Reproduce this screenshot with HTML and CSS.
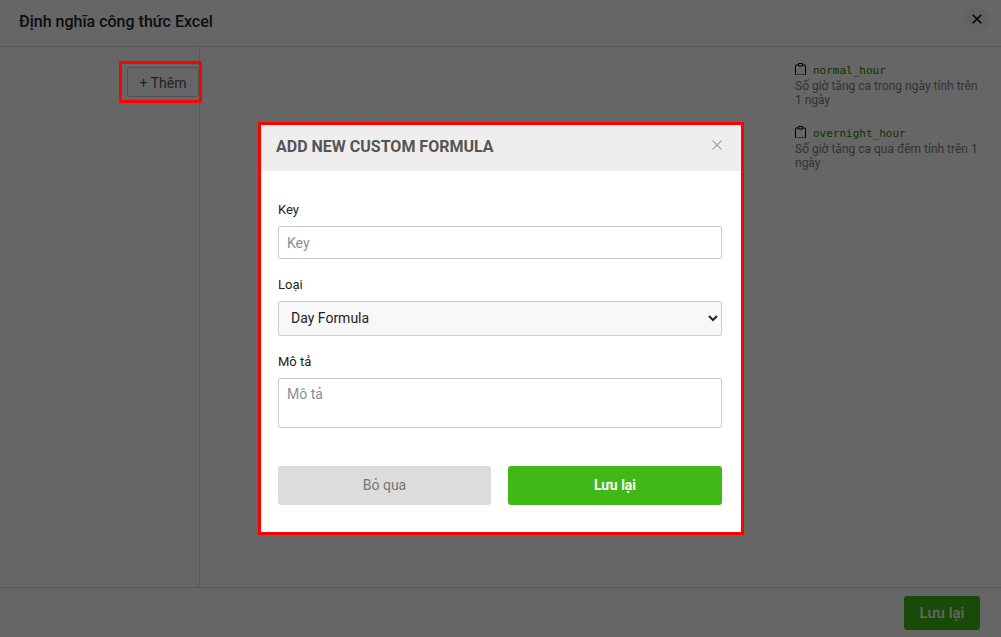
FILE: index.html
```html
<!DOCTYPE html>
<html>
	<head>
		<meta charset="utf-8">
		<meta name="viewport" content="width=device-width, initial-scale=1">
		<title>Định nghĩa công thức Excel</title>
		<link rel="stylesheet" href="styles.css">
	</head>

	<body>
		<!--Trang phía sau-->
		<div class="page">
			<div class="page-head">
				<h1 class="page-title">Định nghĩa công thức Excel</h1>
				<button class="page-close">
					<svg width="10" height="10" viewBox="0 0 10 10"><path d="M.7 .7 9.300 9.300M9.300 .7 .7 9.300" stroke="#000" stroke-width="1.500" fill="none"/></svg>
				</button>
			</div>
			<div class="page-body">
				<div class="side">
					<button class="add-btn">+ Thêm</button>
				</div>
				<div class="content"></div>
				<div class="vars">
					<div class="var">
						<div class="var-key">
							<svg class="clip" width="11" height="12" viewBox="0 0 11 12"><path d="M3 2H1a.5.5 0 0 0-.5.5v9a.5.5 0 0 0 .5.5h9a.5.5 0 0 0 .5-.5v-9a.5.5 0 0 0-.5-.5H8M3.500 .5h4v2.500h-4z" stroke="#000" fill="none"/></svg>
							<code>normal_hour</code>
						</div>
						<p>Số giờ tăng ca trong ngày tính trên 1 ngày</p>
					</div>
					<div class="var">
						<div class="var-key">
							<svg class="clip" width="11" height="12" viewBox="0 0 11 12"><path d="M3 2H1a.5.5 0 0 0-.5.5v9a.5.5 0 0 0 .5.5h9a.5.5 0 0 0 .5-.5v-9a.5.5 0 0 0-.5-.5H8M3.500 .5h4v2.500h-4z" stroke="#000" fill="none"/></svg>
							<code>overnight_hour</code>
						</div>
						<p>Số giờ tăng ca qua đêm tính trên 1 ngày</p>
					</div>
				</div>
			</div>
			<div class="page-foot">
				<button class="foot-save">Lưu lại</button>
			</div>
		</div>

		<!--Lớp phủ và hộp thoại-->
		<div class="overlay">
			<div class="modal">
				<div class="modal-head">
					<h2 class="modal-title">ADD NEW CUSTOM FORMULA</h2>
					<svg class="modal-close" width="10" height="10" viewBox="0 0 10 10"><path d="M.5 .5 9.500 9.500M9.500 .5 .5 9.500" stroke="#aaa" stroke-width="1.400" fill="none"/></svg>
				</div>
				<div class="modal-body">
					<div class="field">
						<label>Key</label>
						<input class="control" type="text" placeholder="Key">
					</div>
					<div class="field">
						<label>Loại</label>
						<select class="control control-select">
							<option>Day Formula</option>
						</select>
					</div>
					<div class="field">
						<label>Mô tả</label>
						<textarea class="control control-area" placeholder="Mô tả"></textarea>
					</div>
					<div class="actions">
						<button class="btn btn-cancel">Bỏ qua</button>
						<button class="btn btn-save">Lưu lại</button>
					</div>
				</div>
			</div>
		</div>

		<!--Khung đỏ đánh dấu nút Thêm-->
		<div class="mark"></div>
	</body>
</html>
```

FILE: styles.css
```css
* {
	box-sizing: border-box;
}
body {
	margin: 0;
	font-family: Roboto, "Liberation Sans", sans-serif;
	background: #fff;
	color: #212529;
}
.page {
	height: 637px;
	display: flex;
	flex-direction: column;
	overflow: hidden;
}
/* Đầu trang */
.page-head {
	height: 47px;
	padding: 0 12px 0 19px;
	border-bottom: 1px solid #dee2e6;
	display: flex;
	align-items: center;
	justify-content: space-between;
	flex: none;
}
.page-title {
	margin: 0 0 3px;
	font-size: 16px;
	font-weight: 500;
}
.page-close {
	width: 25px;
	height: 25px;
	margin-bottom: 8px;
	padding: 0;
	border: none;
	border-radius: 50%;
	background: #f5f5f5;
	display: flex;
	align-items: center;
	justify-content: center;
}
/* Thân trang */
.page-body {
	flex: 1;
	display: flex;
}
.side {
	width: 200px;
	padding-top: 20px;
	border-right: 1px solid #dee2e6;
	display: flex;
	justify-content: flex-end;
	align-items: flex-start;
}
.add-btn {
	width: 72px;
	height: 30px;
	padding: 1px 0 0;
	border: 1px solid #ccc;
	border-radius: 3px;
	background: transparent;
	color: #4c5563;
	font-family: inherit;
	font-size: 14px;
}
.content {
	flex: 1;
}
.vars {
	width: 206px;
	padding: 15px 18px 0 0;
	font-size: 12px;
	line-height: 14px;
	color: #808080;
}
.var {
	margin-bottom: 18px;
}
.var p {
	margin: 0;
}
.var-key {
	height: 17px;
	display: flex;
	align-items: center;
	gap: 7px;
}
.var-key code {
	font-family: "DejaVu Sans Mono", monospace;
	font-size: 11px;
	color: #2f8000;
}
.clip {
	margin-bottom: 4px;
}
/* Chân trang */
.page-foot {
	height: 50px;
	padding: 8px 21px 0 0;
	border-top: 1px solid #dee2e6;
	display: flex;
	justify-content: flex-end;
	align-items: flex-start;
	flex: none;
}
.foot-save {
	width: 76px;
	height: 34px;
	padding: 0;
	border: none;
	border-radius: 3px;
	background: #40b815;
	color: #fff;
	font-family: inherit;
	font-size: 15px;
	font-weight: 500;
}
/* Lớp phủ */
.overlay {
	position: fixed;
	top: 0;
	left: 0;
	right: 0;
	bottom: 0;
	padding: 122px 0 0 258px;
	background: rgba(0, 0, 0, 0.6);
}
.modal {
	width: 486px;
	height: 413px;
	border: 3px solid #f00;
	background: #fff;
}
.modal-head {
	height: 46px;
	padding: 0 19px 4px 15px;
	background: #eee;
	display: flex;
	align-items: center;
	justify-content: space-between;
}
.modal-title {
	margin: 0;
	font-size: 16px;
	font-weight: 700;
	color: #555;
}
.modal-close {
	margin-bottom: 2px;
}
.modal-body {
	padding: 31px 19px 0 17px;
}
.field {
	margin-bottom: 18px;
}
.field label {
	display: block;
	height: 16px;
	margin-bottom: 8px;
	font-size: 13px;
	line-height: 16px;
	font-weight: 400;
	color: #222;
}
.control {
	display: block;
	width: 100%;
	height: 33px;
	padding: 0 8px;
	border: 1px solid #ccc;
	border-radius: 2px;
	background: #fff;
	color: #222;
	font-family: inherit;
	font-size: 14px;
	outline: none;
}
.control::placeholder {
	color: #8a8f96;
}
.control-select {
	height: 35px;
	padding-bottom: 2px;
	background: #f8f8f8;
}
.control-area {
	height: 50px;
	padding: 7px 8px;
	resize: none;
}
.actions {
	margin-top: 38px;
	display: flex;
	gap: 17px;
}
.btn {
	height: 39px;
	padding: 0 0 2px;
	border: none;
	border-radius: 3px;
	font-family: inherit;
	font-size: 14px;
}
.btn-cancel {
	width: 213px;
	background: #dcdcdc;
	color: #777;
}
.btn-save {
	flex: 1;
	background: #40b815;
	color: #fff;
	font-weight: 700;
}
/* Khung đỏ */
.mark {
	position: absolute;
	top: 61px;
	left: 119px;
	width: 83px;
	height: 42px;
	border: 3px solid #f00;
}
```
